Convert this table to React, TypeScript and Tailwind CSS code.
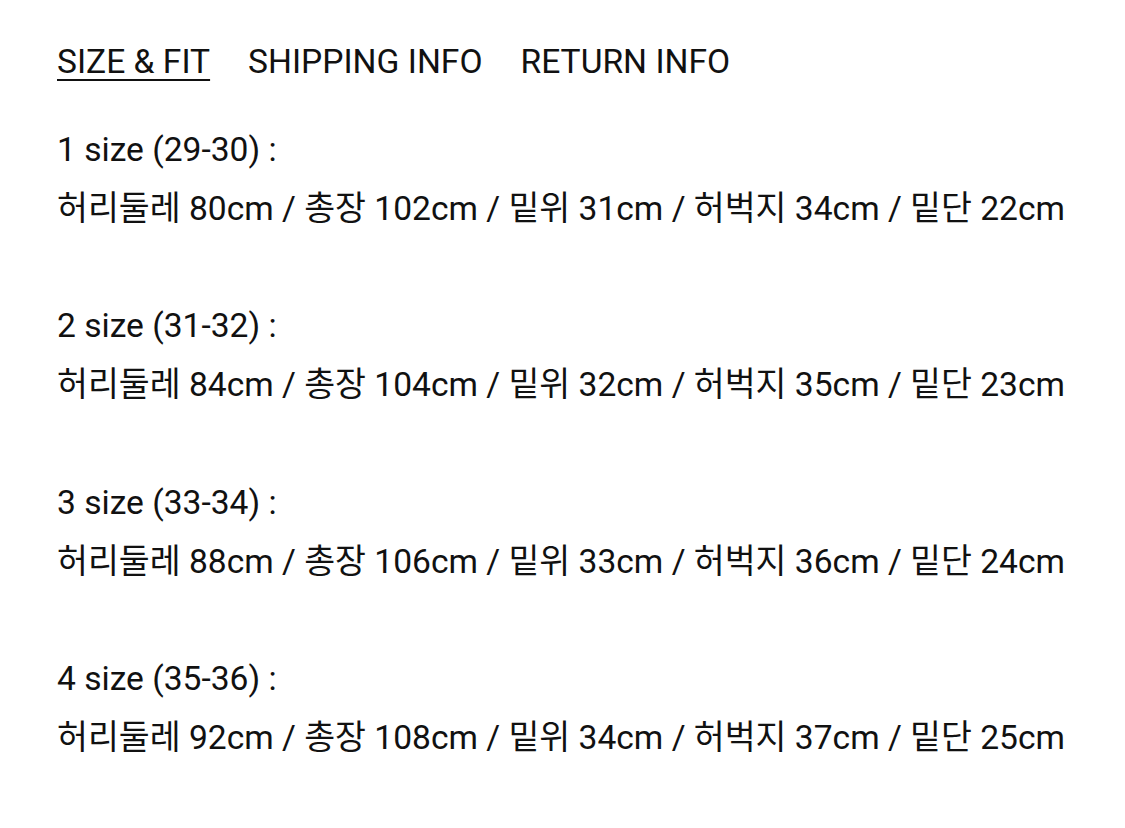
const sizes = [
  { label: '1 size (29-30) :', line: '허리둘레 80cm / 총장 102cm / 밑위 31cm / 허벅지 34cm / 밑단 22cm' },
  { label: '2 size (31-32) :', line: '허리둘레 84cm / 총장 104cm / 밑위 32cm / 허벅지 35cm / 밑단 23cm' },
  { label: '3 size (33-34) :', line: '허리둘레 88cm / 총장 106cm / 밑위 33cm / 허벅지 36cm / 밑단 24cm' },
  { label: '4 size (35-36) :', line: '허리둘레 92cm / 총장 108cm / 밑위 34cm / 허벅지 37cm / 밑단 25cm' },
];

export default function App() {
  return (
    <div
      className="min-h-[828px] bg-white px-[57px] pt-[42px] text-[#111]"
      style={{ fontFamily: 'Roboto, "Noto Sans CJK KR", sans-serif' }}
    >
      <div className="flex gap-[38px] text-[33.6px] leading-[40px]">
        <span className="underline decoration-2 underline-offset-[6px]">SIZE &amp; FIT</span>
        <span>SHIPPING INFO</span>
        <span>RETURN INFO</span>
      </div>

      <div className="mt-[39px] text-[33.6px] leading-[58.8px]">
        {sizes.map((s, i) => (
          <div key={i} className="mb-[58.8px]">
            <p>{s.label}</p>
            <p>{s.line}</p>
          </div>
        ))}
      </div>
    </div>
  );
}
